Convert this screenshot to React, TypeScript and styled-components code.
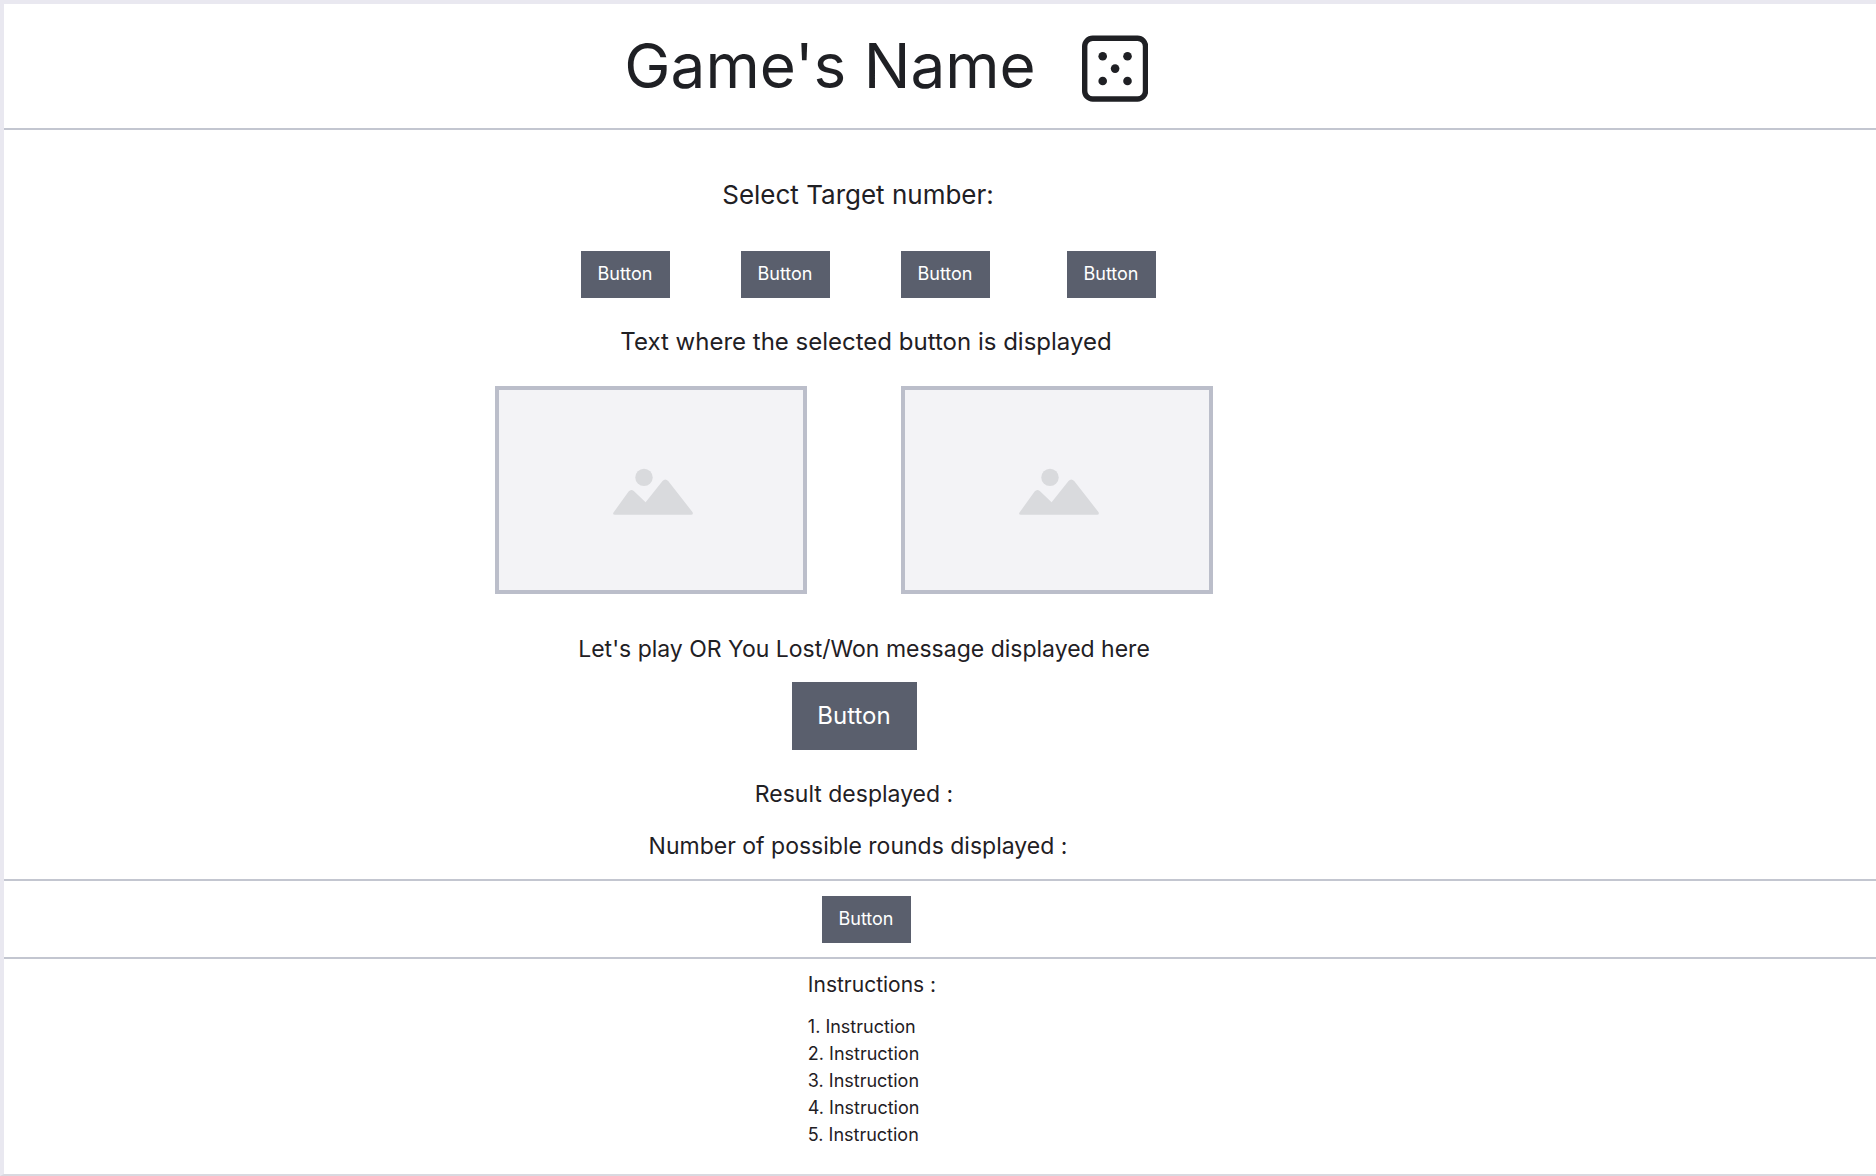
import React from "react";
import styled, { createGlobalStyle } from "styled-components";

const GlobalStyle = createGlobalStyle`
  *, *::before, *::after { box-sizing: border-box; }
  body {
    margin: 0;
    background: #ffffff;
    color: #1f2024;
    font-family: Inter, "Liberation Sans", sans-serif;
  }
  h1, h2, p, ol { margin: 0; padding: 0; font-weight: 400; }
`;

const Page = styled.div`
  display: flex;
  flex-direction: column;
  min-height: 100vh;
  border: solid #e9e8f0;
  border-width: 4px 0 2px 4px;
  border-bottom-color: #d9d9e0;
`;

const Row = styled.div<{ $inset: number }>`
  display: flex;
  justify-content: center;
  padding-right: ${(p) => p.$inset}px;
`;

const Header = styled.header`
  padding: 26px 0;
  border-bottom: 2px solid #c3c6d0;
`;

const Brand = styled(Row)`
  align-items: flex-end;
  gap: 46px;
`;

const Title = styled.h1`
  font-size: 62px;
  line-height: 72px;
`;

const Game = styled.main`
  display: flex;
  flex-direction: column;
  padding: 49px 0 18px;
`;

const Prompt = styled.h2`
  font-size: 26px;
  line-height: 32px;
`;

const Message = styled.p<{ $lead?: boolean }>`
  font-size: ${(p) => (p.$lead ? 24 : 23)}px;
  line-height: 30px;
`;

const Targets = styled.div`
  display: grid;
  grid-template-columns: 160px 160px 166px auto;
  padding: 40px 0 29px;
`;

const Button = styled.button<{ $large?: boolean }>`
  width: ${(p) => (p.$large ? 125 : 89)}px;
  height: ${(p) => (p.$large ? 68 : 47)}px;
  padding: 0 0 2px;
  border: 0;
  background: #5a5f6d;
  color: #ffffff;
  font-family: inherit;
  font-size: ${(p) => (p.$large ? 24 : 18)}px;
  cursor: pointer;
`;

const Dice = styled.div`
  display: flex;
  gap: 94px;
  padding: 29px 0 40px;
`;

const Placeholder = styled.div`
  display: flex;
  align-items: center;
  justify-content: center;
  width: 312px;
  height: 208px;
  border: 4px solid #bbbeca;
  background: #f3f3f6;
`;

const Play = styled.div`
  padding: 18px 0 29px;
`;

const Results = styled.div`
  display: flex;
  flex-direction: column;
  gap: 22px;
`;

const Reset = styled.section`
  padding: 15px 0 14px;
  border: solid #c3c6d0;
  border-width: 2px 0;
`;

const Help = styled.section`
  padding: 13px 0 20px;
`;

const HelpTitle = styled.h2`
  margin-bottom: 15px;
  font-size: 21px;
  line-height: 26px;
`;

const Steps = styled.ol`
  list-style: none;
  font-size: 18px;
  line-height: 27px;
`;

function DiceIcon() {
  return (
    <svg width="66" height="67" viewBox="0 0 66 67" aria-hidden="true">
      <rect x="2.7" y="3.2" width="60.8" height="60.8" rx="8" fill="none" stroke="#1f2024" strokeWidth="5.4" />
      <g fill="#1f2024">
        <circle cx="20.7" cy="21.2" r="4.3" />
        <circle cx="45.5" cy="21.2" r="4.3" />
        <circle cx="33.1" cy="33.6" r="4.3" />
        <circle cx="20.7" cy="46" r="4.3" />
        <circle cx="45.5" cy="46" r="4.3" />
      </g>
    </svg>
  );
}

function PictureIcon() {
  return (
    <svg width="84" height="50" viewBox="0 0 84 50" fill="#d9dadd" aria-hidden="true">
      <circle cx="35" cy="12.4" r="8.7" />
      <path d="M4.5 47.5 19.6 26.6Q22 23.6 24.8 26L36.6 37.2 53.5 16Q56.3 13 59.2 16L83.6 47.2Q84.6 49.8 82 49.8H6Q3.2 49.8 4.5 47.5Z" />
    </svg>
  );
}

const targets = ["first", "second", "third", "fourth"];
const steps = [1, 2, 3, 4, 5];

export default function App() {
  return (
    <>
      <GlobalStyle />
      <Page>
        <Header>
          <Brand $inset={108}>
            <Title>Game's Name</Title>
            <DiceIcon />
          </Brand>
        </Header>
        <Game>
          <Row $inset={164}>
            <Prompt>Select Target number:</Prompt>
          </Row>
          <Row $inset={144}>
            <Targets>
              {targets.map((t) => (
                <Button key={t} type="button">Button</Button>
              ))}
            </Targets>
          </Row>
          <Row $inset={148}>
            <Message $lead>Text where the selected button is displayed</Message>
          </Row>
          <Row $inset={172}>
            <Dice>
              <Placeholder><PictureIcon /></Placeholder>
              <Placeholder><PictureIcon /></Placeholder>
            </Dice>
          </Row>
          <Row $inset={152}>
            <Message>Let's play OR You Lost/Won message displayed here</Message>
          </Row>
          <Row $inset={172}>
            <Play>
              <Button type="button" $large>Button</Button>
            </Play>
          </Row>
          <Results>
            <Row $inset={172}>
              <Message>Result desplayed :</Message>
            </Row>
            <Row $inset={164}>
              <Message>Number of possible rounds displayed :</Message>
            </Row>
          </Results>
        </Game>
        <Reset>
          <Row $inset={148}>
            <Button type="button">Button</Button>
          </Row>
        </Reset>
        <Help>
          <Row $inset={136}>
            <div>
              <HelpTitle>Instructions :</HelpTitle>
              <Steps>
                {steps.map((n) => (
                  <li key={n}>{n}. Instruction</li>
                ))}
              </Steps>
            </div>
          </Row>
        </Help>
      </Page>
    </>
  );
}
